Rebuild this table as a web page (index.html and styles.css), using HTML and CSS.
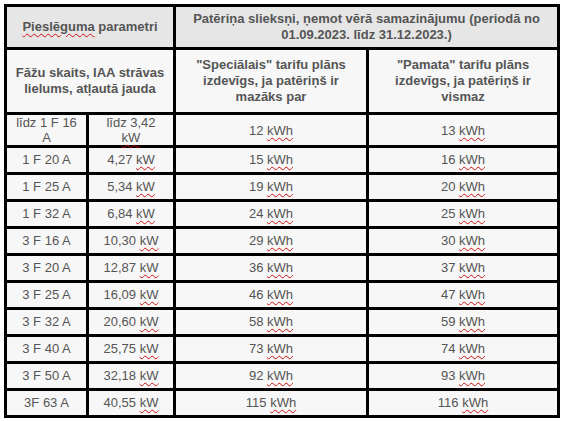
FILE: index.html
```html
<!DOCTYPE html>
<html lang="lv">
<head>
<meta charset="utf-8">
<link rel="stylesheet" href="styles.css">
</head>
<body>
<table class="grid">
  <colgroup>
    <col class="c1"><col class="c2"><col class="c3"><col class="c4">
  </colgroup>
  <thead>
    <tr class="h1">
      <th colspan="2"><span class="sq">Pieslēguma</span> parametri</th>
      <th colspan="2">Patēriņa slieksņi, ņemot vērā samazinājumu (periodā no 01.09.2023. līdz 31.12.2023.)</th>
    </tr>
    <tr class="h2">
      <th colspan="2">Fāžu skaits, IAA strāvas lielums, atļautā jauda</th>
      <th>"Speciālais" tarifu plāns izdevīgs, ja patēriņš ir mazāks par</th>
      <th>"Pamata" tarifu plāns izdevīgs, ja patēriņš ir vismaz</th>
    </tr>
  </thead>
  <tbody>
    <tr class="r2"><td>līdz 1 F 16 A</td><td>līdz 3,42 <span class="sq">kW</span></td><td>12 <span class="sq">kWh</span></td><td>13 <span class="sq">kWh</span></td></tr>
    <tr><td>1 F 20 A</td><td>4,27 <span class="sq">kW</span></td><td>15 <span class="sq">kWh</span></td><td>16 <span class="sq">kWh</span></td></tr>
    <tr><td>1 F 25 A</td><td>5,34 <span class="sq">kW</span></td><td>19 <span class="sq">kWh</span></td><td>20 <span class="sq">kWh</span></td></tr>
    <tr><td>1 F 32 A</td><td>6,84 <span class="sq">kW</span></td><td>24 <span class="sq">kWh</span></td><td>25 <span class="sq">kWh</span></td></tr>
    <tr><td>3 F 16 A</td><td>10,30 <span class="sq">kW</span></td><td>29 <span class="sq">kWh</span></td><td>30 <span class="sq">kWh</span></td></tr>
    <tr><td>3 F 20 A</td><td>12,87 <span class="sq">kW</span></td><td>36 <span class="sq">kWh</span></td><td>37 <span class="sq">kWh</span></td></tr>
    <tr><td>3 F 25 A</td><td>16,09 <span class="sq">kW</span></td><td>46 <span class="sq">kWh</span></td><td>47 <span class="sq">kWh</span></td></tr>
    <tr><td>3 F 32 A</td><td>20,60 <span class="sq">kW</span></td><td>58 <span class="sq">kWh</span></td><td>59 <span class="sq">kWh</span></td></tr>
    <tr><td>3 F 40 A</td><td>25,75 <span class="sq">kW</span></td><td>73 <span class="sq">kWh</span></td><td>74 <span class="sq">kWh</span></td></tr>
    <tr><td>3 F 50 A</td><td>32,18 <span class="sq">kW</span></td><td>92 <span class="sq">kWh</span></td><td>93 <span class="sq">kWh</span></td></tr>
    <tr><td>3F 63 A</td><td>40,55 <span class="sq">kW</span></td><td>115 <span class="sq">kWh</span></td><td>116 <span class="sq">kWh</span></td></tr>
  </tbody>
</table>
</body>
</html>
```
FILE: styles.css
```css
html, body {
  margin: 0;
  padding: 0;
  background: #ffffff;
}
body {
  padding: 4px;
  font-family: "Liberation Sans", Arial, sans-serif;
  font-size: 13px;
  color: #555555;
}
.grid {
  border-collapse: collapse;
  table-layout: fixed;
  width: 553px;
}
.c1 { width: 82px; }
.c2 { width: 87px; }
.c3 { width: 193px; }
.c4 { width: 191px; }
.grid th, .grid td {
  border: 3px solid #000000;
  padding: 0 7px;
  text-align: center;
  vertical-align: middle;
  line-height: 16px;
  background: #f7f7f7;
}
.grid th {
  font-weight: bold;
}
.h1 th {
  background: #e6e6e6;
  height: 40px;
}
.h2 th {
  height: 62px;
}
.grid td {
  height: 24px;
}
.grid .r2 td {
  height: 30px;
  line-height: 15px;
}
.sq {
  text-decoration: underline wavy #d01010;
  text-decoration-thickness: 1px;
  text-underline-offset: 2px;
}
```
